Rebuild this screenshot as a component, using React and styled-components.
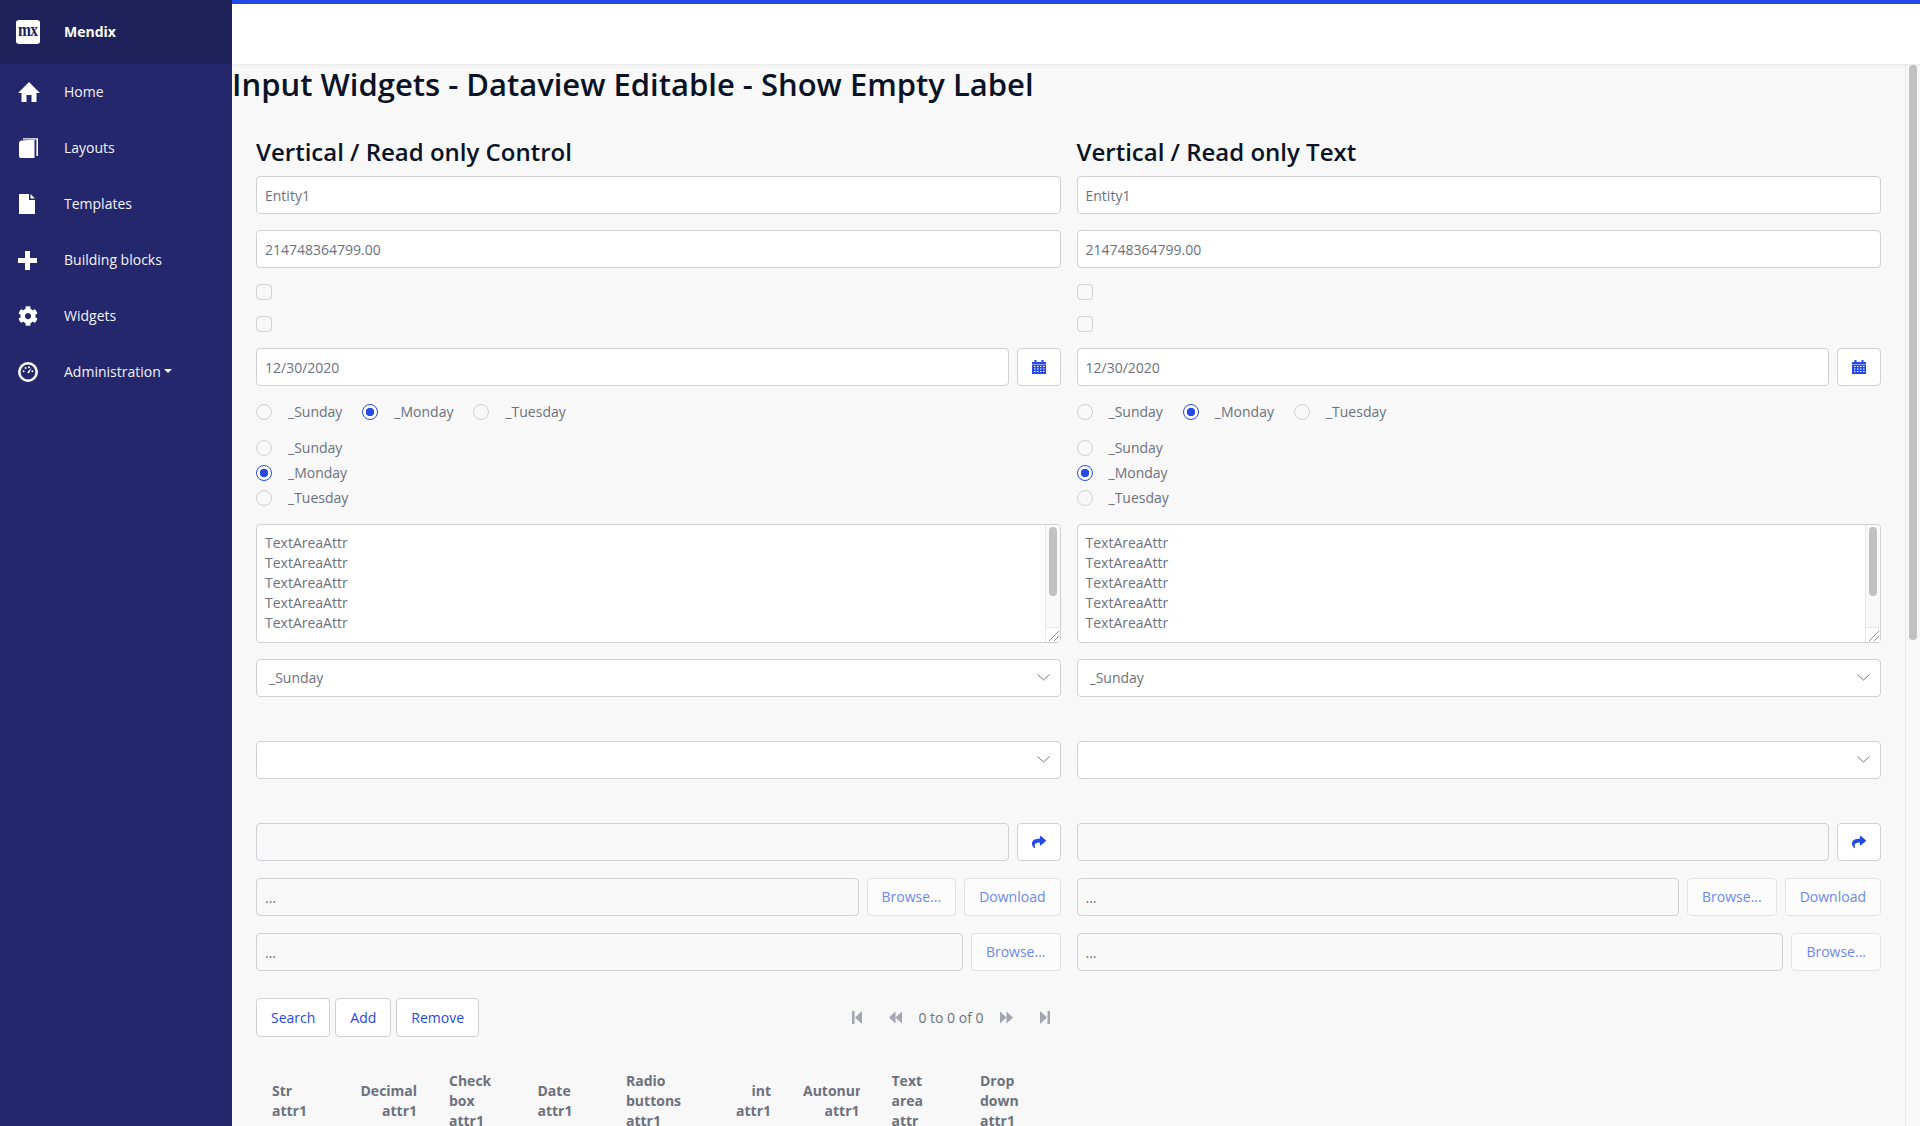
import React from "react";
import styled, { createGlobalStyle } from "styled-components";
import { FaCog, FaShare } from "react-icons/fa";

const Global = createGlobalStyle`
  html, body { margin: 0; padding: 0; height: 100%; }
  body { font-family: "Open Sans", "Noto Sans", sans-serif; font-size: 14px; line-height: 20px; color: #6c717e; background: #f8f8f8; }
  * { box-sizing: border-box; }
`;

const Shell = styled.div`
  display: flex;
  height: 100vh;
  overflow: hidden;
`;
const Sidebar = styled.aside`
  flex: 0 0 232px;
  background: #24276c;
  color: #fff;
`;
const Brand = styled.div`
  display: flex;
  align-items: center;
  height: 64px;
  padding-left: 16px;
  background: #1f215a;
  font-weight: 700;
`;
const BrandLogo = styled.span`
  display: flex;
  align-items: center;
  justify-content: center;
  width: 24px;
  height: 24px;
  margin-right: 24px;
  border-radius: 3px;
  background: #fff;
  overflow: hidden;
`;
const BrandMark = styled.span`
  display: block;
  color: #1f215a;
  font-family: "Liberation Serif", serif;
  font-size: 19px;
  line-height: 20px;
  font-weight: 700;
  letter-spacing: -1px;
  transform: translateY(-2px) scaleX(0.82);
`;
const Nav = styled.nav`
  display: flex;
  flex-direction: column;
`;
const NavItem = styled.a`
  display: flex;
  align-items: center;
  height: 56px;
  font-weight: 500;
  font-size: 14px;
  color: #f4f4fa;
`;
const NavIcon = styled.span`
  display: flex;
  align-items: center;
  justify-content: flex-start;
  width: 64px;
  padding-left: 18px;
  svg { display: block; fill: #fff; }
`;
const Caret = styled.i`
  display: inline-block;
  margin-left: 3px;
  margin-bottom: 2px;
  border-left: 4px solid transparent;
  border-right: 4px solid transparent;
  border-top: 4px solid #fff;
`;
const Main = styled.div`
  flex: 1;
  min-width: 0;
  display: flex;
  flex-direction: column;
`;
const Topbar = styled.header`
  flex: 0 0 64px;
  background: #fff;
  border-top: 4px solid #264ae5;
  box-shadow: 0 1px 3px rgba(0, 0, 0, 0.08);
  position: relative;
  z-index: 1;
`;
const Body = styled.div`
  flex: 1;
  min-height: 0;
  display: flex;
`;
const Scroller = styled.main`
  flex: 1;
  min-width: 0;
  overflow: hidden;
`;
const ScrollTrack = styled.div`
  flex: 0 0 15px;
  padding: 1px 3px 0;
  background: #f8f8f8;
  border-left: 1px solid #e8e8e8;
`;
const ScrollThumb = styled.div`
  width: 8px;
  height: 575px;
  border-radius: 4px;
  background: #c1c1c1;
`;
const Title = styled.h1`
  margin: 1px 0 0;
  font-size: 31px;
  line-height: 38px;
  font-weight: 600;
  color: #0a1326;
`;
const Columns = styled.div`
  display: grid;
  grid-template-columns: minmax(0, 1fr) minmax(0, 1fr);
  column-gap: 16px;
  padding: 34px 24px 0;
`;
const Column = styled.section`
  display: flex;
  flex-direction: column;
  gap: 16px;
  min-width: 0;
`;
const Heading = styled.h2`
  margin: 0 0 -7px;
  font-size: 24px;
  line-height: 30px;
  font-weight: 600;
  color: #0a1326;
`;
const TextInput = styled.input`
  display: block;
  min-width: 0;
  width: 100%;
  height: 38px;
  padding: 0 8px;
  font: inherit;
  color: #6c717e;
  background: ${(p) => (p.$flat ? "#f8f8f8" : "#fff")};
  border: 1px solid #ced0d3;
  border-radius: 4px;
  outline: none;
`;
const Check = styled.input.attrs({ type: "checkbox", disabled: true })`
  display: block;
  appearance: none;
  width: 16px;
  height: 16px;
  margin: 0;
  background: #f8f8f8;
  border: 1px solid #ced0d3;
  border-radius: 4px;
`;
const InputRow = styled.div`
  display: flex;
  gap: 8px;
  margin-top: ${(p) => p.$top || 0}px;
  ${TextInput} { flex: 1 1 0; }
`;
const IconButton = styled.button`
  flex: 0 0 44px;
  height: 38px;
  display: flex;
  align-items: center;
  justify-content: center;
  padding: 0;
  background: #fff;
  border: 1px solid #ced0d3;
  border-radius: 4px;
  color: #264ae5;
  svg { display: block; }
`;
const FileButton = styled.button`
  flex: none;
  height: 38px;
  padding: 0 14px;
  font: inherit;
  color: #6d87ee;
  background: #fcfcfc;
  border: 1px solid #e0e1e4;
  border-radius: 4px;
`;
const RadioRow = styled.div`
  display: flex;
  gap: 20px;
`;
const RadioStack = styled.div`
  display: flex;
  flex-direction: column;
  gap: 5px;
`;
const RadioLabel = styled.label`
  display: flex;
  align-items: center;
  gap: 16px;
  height: 20px;
`;
const RadioDot = styled.span`
  flex: none;
  width: 16px;
  height: 16px;
  border-radius: 50%;
  border: 1px solid ${(p) => (p.$on ? "#264ae5" : "#ced0d3")};
  background: ${(p) => (p.$on ? "radial-gradient(circle, #264ae5 0 4px, #fff 4.5px)" : "#f8f8f8")};
`;
const AreaWrap = styled.div`
  position: relative;
`;
const Area = styled.textarea`
  display: block;
  width: 100%;
  height: 119px;
  padding: 8px;
  font: inherit;
  color: #6c717e;
  background: #fff;
  border: 1px solid #ced0d3;
  border-radius: 4px;
  outline: none;
  resize: none;
  overflow: hidden;
`;
const AreaBar = styled.div`
  position: absolute;
  top: 1px;
  right: 1px;
  bottom: 1px;
  width: 15px;
  display: flex;
  flex-direction: column;
  background: #f9f9f9;
  border-left: 1px solid #e8e8e8;
  border-radius: 0 3px 3px 0;
`;
const AreaThumb = styled.div`
  flex: none;
  width: 8px;
  height: 69px;
  margin: 2px 0 0 3px;
  border-radius: 4px;
  background: #c1c1c1;
`;
const AreaCorner = styled.div`
  margin-top: auto;
  height: 15px;
  background: #fff;
  border-top: 1px solid #e8e8e8;
  svg { display: block; }
`;
const SelectWrap = styled.div`
  position: relative;
  margin-bottom: ${(p) => p.$after || 0}px;
  svg { position: absolute; right: 11px; top: 15px; pointer-events: none; }
`;
const Select = styled.select`
  display: block;
  appearance: none;
  width: 100%;
  height: 38px;
  padding: 0 12px;
  font: inherit;
  color: #6c717e;
  background: #fff;
  border: 1px solid #ced0d3;
  border-radius: 4px;
  outline: none;
`;
const ControlBar = styled.div`
  display: flex;
  align-items: center;
  justify-content: space-between;
  margin-top: 11px;
  margin-right: -1px;
`;
const ActionGroup = styled.div`
  display: flex;
  gap: 5px;
`;
const ActionButton = styled.button`
  height: 39px;
  padding: 0 14px;
  font: inherit;
  font-weight: 500;
  color: #264ae5;
  background: #fff;
  border: 1px solid #ced0d3;
  border-radius: 4px;
`;
const Pager = styled.div`
  display: flex;
  align-items: center;
  gap: 4px;
`;
const PagerButton = styled.span`
  display: flex;
  align-items: center;
  justify-content: center;
  width: 34px;
  height: 38px;
  svg { display: block; fill: #a3a5af; }
`;
const PagerText = styled.span`
  margin: 0 2px;
`;
const GridHead = styled.div`
  display: grid;
  grid-template-columns: repeat(9, 88.5px);
  margin-top: 2px;
`;
const HeadCell = styled.div`
  display: flex;
  align-items: center;
  padding: 16px;
  font-weight: 700;
  text-align: ${(p) => (p.$right ? "right" : "left")};
`;
const HeadLabel = styled.div`
  width: 100%;
  overflow: hidden;
`;

const Chevron = () => (
  <svg width="13" height="7" viewBox="0 0 13 7" fill="none" stroke="#666" strokeWidth="0.9">
    <polyline points="0.5,0.5 6.5,6 12.5,0.5" />
  </svg>
);
const HomeIcon = () => (
  <svg width="22" height="20" viewBox="0 0 22 20"><path d="M11 0 L22 11 H18.5 V20 H13.5 V13 H8.5 V20 H3.5 V11 H0 Z" /></svg>
);
const BookIcon = () => (
  <svg width="19" height="20" viewBox="0 0 19 20" style={{ marginLeft: 1 }}><path d="M0 5 Q0 3 3 2.5 L15.5 1.5 V20 H2 Q0 20 0 18 Z" /><path d="M4 .3 H19 V18 H17.4 V1.5 H4 Z" /></svg>
);
const FileIcon = () => (
  <svg width="16" height="20" viewBox="0 0 16 20" style={{ marginLeft: 1 }}><path d="M0 0 H10 V6 H16 V20 H0 Z" /><path d="M11.5 0 L16 4.5 H11.5 Z" /></svg>
);
const PlusIcon = () => (
  <svg width="19" height="19" viewBox="0 0 19 19"><path d="M7 0 h5 v7 h7 v5 h-7 v7 h-5 v-7 h-7 v-5 h7 Z" /></svg>
);
const DashIcon = () => (
  <svg width="20" height="20" viewBox="0 0 20 20">
    <path fillRule="evenodd" d="M10 0a10 10 0 1 0 0 20a10 10 0 1 0 0-20Zm0 2.6a7.4 7.4 0 1 1 0 14.8a7.4 7.4 0 1 1 0-14.8Z" />
    <circle cx="5.6" cy="9.2" r="1" /><circle cx="7.6" cy="6" r="1" /><circle cx="11" cy="5.2" r="1" /><circle cx="14.4" cy="9.2" r="1" />
    <path d="M13.6 5.6 L11 11.5 L9.2 10.4 Z" />
  </svg>
);
const CalendarIcon = () => (
  <svg width="14" height="14" viewBox="0 0 14 14" fill="#264ae5">
    <path d="M0 2 H2.5 V0 H4.5 V2 H9.5 V0 H11.5 V2 H14 V4.5 H0 Z" />
    <path fillRule="evenodd" d="M0 5 H14 V14 H0 Z M2 6 V7 H3.5 V6 Z M5 6 V7 H6.5 V6 Z M8 6 V7 H9.5 V6 Z M11 6 V7 H12.5 V6 Z M2 8.5 V9.5 H3.5 V8.5 Z M5 8.5 V9.5 H6.5 V8.5 Z M8 8.5 V9.5 H9.5 V8.5 Z M11 8.5 V9.5 H12.5 V8.5 Z M2 11 V12 H3.5 V11 Z M5 11 V12 H6.5 V11 Z M8 11 V12 H9.5 V11 Z M11 11 V12 H12.5 V11 Z" />
  </svg>
);
const ResizeGrip = () => (
  <svg width="14" height="14" viewBox="0 0 14 14" fill="none" stroke="#8c8c8c" strokeWidth="1">
    <path d="M3 13 L13 3 M8 13 L13 8" />
  </svg>
);
const First = () => (
  <svg width="10" height="13" viewBox="0 0 10 13"><path d="M0 0 H2.5 V13 H0 Z M3 6.5 L10 0 V13 Z" /></svg>
);
const Prev = () => (
  <svg width="13" height="13" viewBox="0 0 13 13"><path d="M0 6.5 L6.5 .5 V12.5 Z M6.5 6.5 L13 .5 V12.5 Z" /></svg>
);
const Next = () => (
  <svg width="13" height="13" viewBox="0 0 13 13"><path d="M13 6.5 L6.5 .5 V12.5 Z M6.5 6.5 L0 .5 V12.5 Z" /></svg>
);
const Last = () => (
  <svg width="10" height="13" viewBox="0 0 10 13"><path d="M10 0 H7.5 V13 H10 Z M7 6.5 L0 0 V13 Z" /></svg>
);

const navItems = [
  ["Home", <HomeIcon />],
  ["Layouts", <BookIcon />],
  ["Templates", <FileIcon />],
  ["Building blocks", <PlusIcon />],
  ["Widgets", <FaCog size={20} />],
];
const days = ["_Sunday", "_Monday", "_Tuesday"];
const areaText = Array(5).fill("TextAreaAttr").join("\n");
const headers = [
  ["Str attr1"],
  ["Decimal attr1", true],
  ["Check box attr1"],
  ["Date attr1"],
  ["Radio buttons attr1"],
  ["int attr1", true],
  ["Autonumber attr1", true],
  ["Text area attr"],
  ["Drop down attr1"],
];

const Radios = () =>
  days.map((d, i) => (
    <RadioLabel key={d}>
      <RadioDot $on={i === 1} />
      {d}
    </RadioLabel>
  ));

const FormColumn = ({ title, grid }) => (
  <Column>
    <Heading>{title}</Heading>
    <TextInput readOnly value="Entity1" />
    <TextInput readOnly value="214748364799.00" />
    <Check />
    <Check />
    <InputRow>
      <TextInput readOnly value="12/30/2020" />
      <IconButton><CalendarIcon /></IconButton>
    </InputRow>
    <RadioRow><Radios /></RadioRow>
    <RadioStack><Radios /></RadioStack>
    <AreaWrap>
      <Area readOnly value={areaText} />
      <AreaBar>
        <AreaThumb />
        <AreaCorner><ResizeGrip /></AreaCorner>
      </AreaBar>
    </AreaWrap>
    <SelectWrap $after={28}>
      <Select defaultValue="_Sunday">{days.map((d) => <option key={d}>{d}</option>)}</Select>
      <Chevron />
    </SelectWrap>
    <SelectWrap $after={28}>
      <Select defaultValue=""><option value="" /></Select>
      <Chevron />
    </SelectWrap>
    <InputRow>
      <TextInput $flat readOnly value="" />
      <IconButton><FaShare size={14} /></IconButton>
    </InputRow>
    <InputRow $top={1}>
      <TextInput $flat readOnly value="..." />
      <FileButton>Browse...</FileButton>
      <FileButton>Download</FileButton>
    </InputRow>
    <InputRow $top={1}>
      <TextInput $flat readOnly value="..." />
      <FileButton>Browse...</FileButton>
    </InputRow>
    {grid && (
      <>
        <ControlBar>
          <ActionGroup>
            <ActionButton>Search</ActionButton>
            <ActionButton>Add</ActionButton>
            <ActionButton>Remove</ActionButton>
          </ActionGroup>
          <Pager>
            <PagerButton><First /></PagerButton>
            <PagerButton><Prev /></PagerButton>
            <PagerText>0 to 0 of 0</PagerText>
            <PagerButton><Next /></PagerButton>
            <PagerButton><Last /></PagerButton>
          </Pager>
        </ControlBar>
        <GridHead>
          {headers.map(([label, right]) => (
            <HeadCell key={label} $right={right}>
              <HeadLabel>{label}</HeadLabel>
            </HeadCell>
          ))}
        </GridHead>
      </>
    )}
  </Column>
);

export default function App() {
  return (
    <Shell>
      <Global />
      <Sidebar>
        <Brand>
          <BrandLogo><BrandMark>mx</BrandMark></BrandLogo>
          Mendix
        </Brand>
        <Nav>
          {navItems.map(([label, icon]) => (
            <NavItem key={label}>
              <NavIcon>{icon}</NavIcon>
              {label}
            </NavItem>
          ))}
          <NavItem>
            <NavIcon><DashIcon /></NavIcon>
            Administration<Caret />
          </NavItem>
        </Nav>
      </Sidebar>
      <Main>
        <Topbar />
        <Body>
          <Scroller>
            <Title>Input Widgets - Dataview Editable - Show Empty Label</Title>
            <Columns>
              <FormColumn title="Vertical / Read only Control" grid />
              <FormColumn title="Vertical / Read only Text" />
            </Columns>
          </Scroller>
          <ScrollTrack><ScrollThumb /></ScrollTrack>
        </Body>
      </Main>
    </Shell>
  );
}
